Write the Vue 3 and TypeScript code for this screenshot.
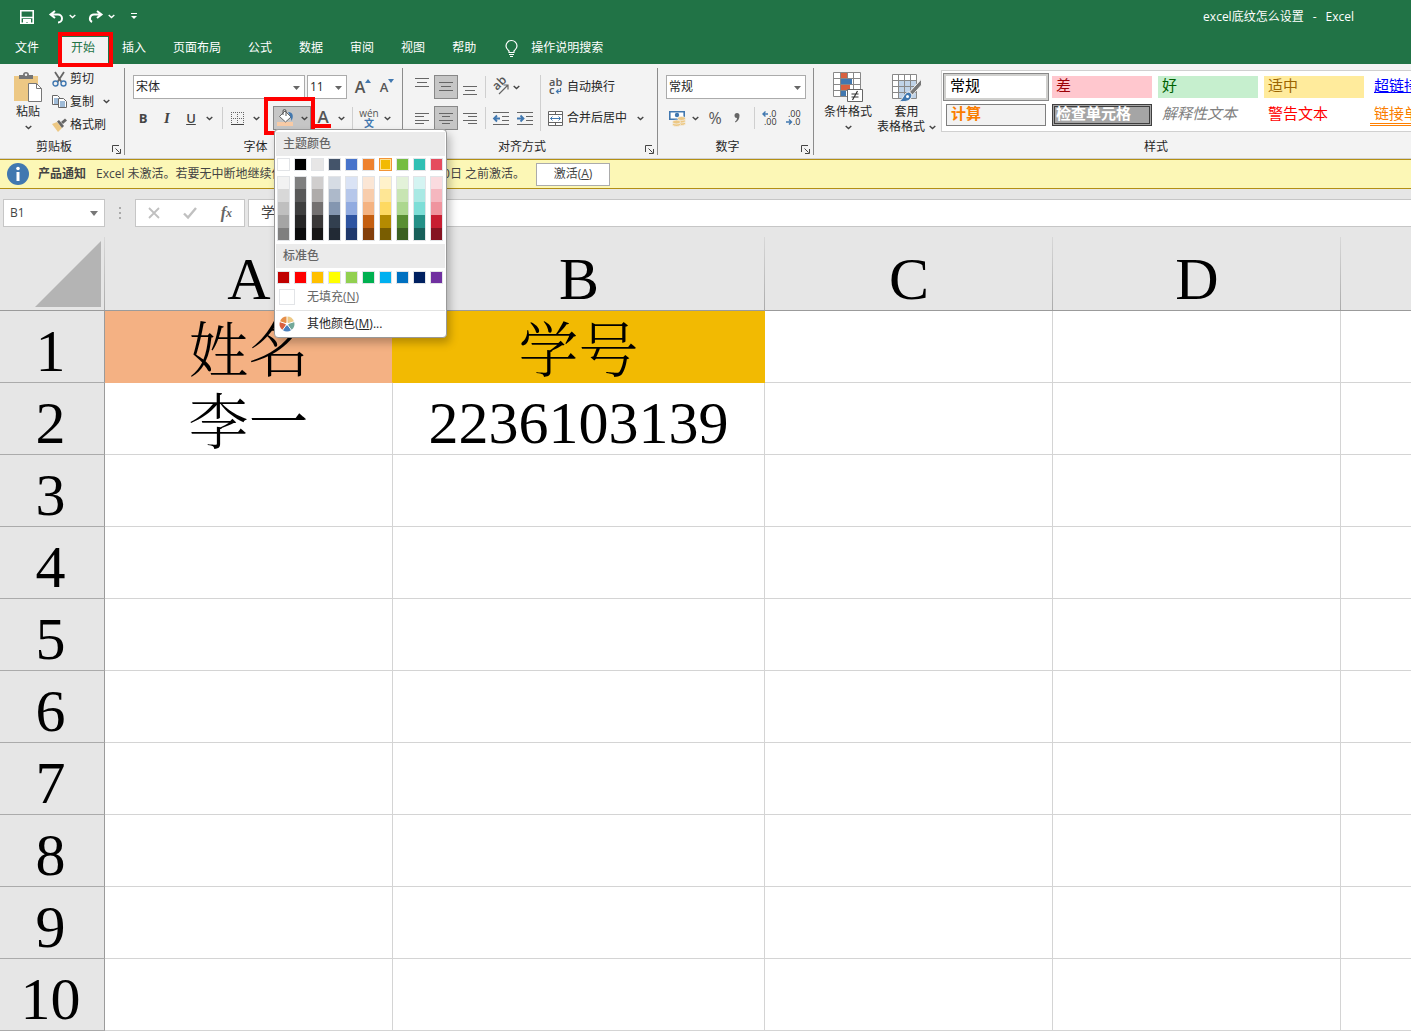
<script setup lang="ts">
import { ref } from 'vue'

interface ThemeColumn {
  base: string
  tints: string[]
}

interface CellStyle {
  name: string
  kind: string
}

const tabs = ['文件', '开始', '插入', '页面布局', '公式', '数据', '审阅', '视图', '帮助']
const activeTab = ref('开始')

const themeColumns: ThemeColumn[] = [
  { base: '#ffffff', tints: ['#f2f2f2', '#d8d8d8', '#bfbfbf', '#a5a5a5', '#7f7f7f'] },
  { base: '#000000', tints: ['#7f7f7f', '#595959', '#3f3f3f', '#262626', '#0c0c0c'] },
  { base: '#e7e6e6', tints: ['#d0cece', '#aeabaa', '#737070', '#3a3838', '#171616'] },
  { base: '#44546a', tints: ['#d6dce4', '#adb9ca', '#8496b0', '#323f4f', '#222a35'] },
  { base: '#4874cb', tints: ['#dae3f5', '#b6c7ea', '#91abe0', '#2e54a1', '#1f386b'] },
  { base: '#ee822f', tints: ['#fbe6d5', '#f8cdac', '#f4b382', '#c45f11', '#833f0b'] },
  { base: '#f2ba02', tints: ['#fff2ca', '#fee695', '#fed961', '#b58b01', '#795d01'] },
  { base: '#75bd42', tints: ['#e3f2d9', '#c8e5b3', '#acd78e', '#588e32', '#3a5f21'] },
  { base: '#30c0b4', tints: ['#d4f4f2', '#a9e9e4', '#7dded7', '#249087', '#18605a'] },
  { base: '#e54c5e', tints: ['#fadbdf', '#f5b7bf', '#ef949e', '#c81d31', '#851321'] },
]
const pickedTheme = ref('#f2ba02')

const standardColors = [
  '#c00000', '#ff0000', '#ffc000', '#ffff00', '#92d050',
  '#00b050', '#00b0f0', '#0070c0', '#002060', '#7030a0',
]

const cellStyles: CellStyle[] = [
  { name: '常规', kind: 'normal' },
  { name: '差', kind: 'bad' },
  { name: '好', kind: 'good' },
  { name: '适中', kind: 'neutral' },
  { name: '超链接', kind: 'hyperlink' },
  { name: '计算', kind: 'calc' },
  { name: '检查单元格', kind: 'check' },
  { name: '解释性文本', kind: 'explain' },
  { name: '警告文本', kind: 'warn' },
  { name: '链接单元格', kind: 'linked' },
]

const columns = ['A', 'B', 'C', 'D', '']
const rowCount = 10
const cells: Record<string, string> = { A1: '姓名', B1: '学号', A2: '李一', B2: '2236103139' }

const isHan = (text?: string): boolean => /[\u4e00-\u9fff]/.test(text ?? '')

const fontName = ref('宋体')
const fontSize = ref('11')
const numberFormat = ref('常规')
const cellRef = ref('B1')
const formula = ref('学号')
</script>

<template>
  <div class="app">
    <svg class="defs" aria-hidden="true">
      <symbol id="chev" viewBox="0 0 7 5"><path d="M.7 1l2.8 2.6L6.300 1" fill="none" stroke="currentColor" stroke-width="1.4" /></symbol>
      <symbol id="tri" viewBox="0 0 7 4"><path d="M0 0h7L3.500 4z" fill="currentColor" /></symbol>
      <symbol id="launch" viewBox="0 0 9 9"><path d="M.5 7V.5H7M3.500 3.500l4 4M8.500 4v4.500H4" fill="none" stroke="#444" /></symbol>
    </svg>

    <header class="titlebar">
      <div class="quick">
        <button aria-label="保存" class="q-save">
          <svg width="14" height="14" viewBox="0 0 14 14"><path d="M.8.8h12.400v12.400H.8zM.8 7.500h12.400" fill="none" stroke="#fff" stroke-width="1.600" /><path d="M3 9h8v5H8v-2H6v2H3z" fill="#fff" /></svg>
        </button>
        <button aria-label="撤消" class="q-undo">
          <svg width="15" height="13" viewBox="0 0 15 13"><path d="M6 1L1.500 4.500 6 8M2 4.500h7a4 4 0 0 1 0 8" fill="none" stroke="#fff" stroke-width="2" /></svg>
          <svg class="chev"><use href="#chev" /></svg>
        </button>
        <button aria-label="恢复" class="q-redo">
          <svg width="15" height="13" viewBox="0 0 15 13"><path d="M9 1l4.500 3.500L9 8M13 4.500H6a4 4 0 0 0-2 7.500" fill="none" stroke="#fff" stroke-width="2" /></svg>
          <svg class="chev"><use href="#chev" /></svg>
        </button>
        <button aria-label="自定义快速访问工具栏">
          <svg width="6" height="7" viewBox="0 0 6 7"><path d="M0 .5h6" stroke="#fff" /><path d="M0 3h6L3 6z" fill="#fff" /></svg>
        </button>
      </div>
      <div class="doc-title"><span>excel底纹怎么设置</span><span>-</span><span>Excel</span></div>
    </header>

    <nav class="tabs">
      <button
        v-for="tab in tabs"
        :key="tab"
        :class="['tab', { active: tab === activeTab, file: tab === '文件' }]"
        @click="activeTab = tab"
      >{{ tab }}</button>
      <button class="tell-me">
        <svg width="13" height="17" viewBox="0 0 13 17"><path d="M4 12.500V11C2.500 9.500 1 8.500 1 6a5.500 5.500 0 0 1 11 0c0 2.500-1.500 3.500-3 5v1.500zM4 14.500h5M5 16.500h3" fill="none" stroke="#fff" stroke-width="1.200" /></svg>
        操作说明搜索
      </button>
    </nav>

    <section class="ribbon">
      <div class="group clipboard">
        <div class="body">
          <button class="paste">
            <svg width="30" height="31" viewBox="0 0 30 31"><path d="M1 4h24v25H1z" fill="#edc884" /><path d="M6 7V3h4a3 3 0 0 1 6 0h4v4z" fill="#757575" /><circle cx="13" cy="2.800" r="1.200" fill="#f3f3f3" /><path d="M15.500 11.500h8l5 5v13h-13z" fill="#fff" stroke="#777" /><path d="M23.500 11.500v5h5" fill="none" stroke="#777" /></svg>
            <span>粘贴</span>
            <svg class="chev"><use href="#chev" /></svg>
          </button>
          <div class="clip-list">
            <button>
              <svg width="15" height="16" viewBox="0 0 15 16"><path d="M3 1l6.500 10M12 1L5.500 11" stroke="#666" stroke-width="1.800" /><circle cx="3.500" cy="12.500" r="2.500" fill="none" stroke="#4178b0" stroke-width="1.400" /><circle cx="11.500" cy="12.500" r="2.500" fill="none" stroke="#4178b0" stroke-width="1.400" /></svg>
              剪切
            </button>
            <button>
              <svg width="15" height="15" viewBox="0 0 15 15"><path d="M.5 1.500h5l2 2v7h-7z" fill="#fff" stroke="#666" /><path d="M2 5h4M2 7h4M2 9h4" stroke="#4178b0" /><path d="M6.500 4.500h5l3 3v6h-8z" fill="#fff" stroke="#666" /><path d="M8 8h5M8 10h5M8 12h5" stroke="#4178b0" /></svg>
              复制
              <svg class="chev far"><use href="#chev" /></svg>
            </button>
            <button>
              <svg width="15" height="14" viewBox="0 0 15 14"><path d="M0 6l5-2 5 6-4 4z" fill="#edc884" /><path d="M5 3.500l2-1.500 5 6-2 2z" fill="#666" /><path d="M9 4l4-3.500 2 2L11 6z" fill="#666" /></svg>
              格式刷
            </button>
          </div>
        </div>
        <footer>剪贴板<svg class="launch"><use href="#launch" /></svg></footer>
      </div>

      <div class="group font">
        <div class="rows">
          <div class="row">
            <label class="combo name"><select v-model="fontName" aria-label="字体"><option>宋体</option></select><svg class="tri"><use href="#tri" /></svg></label>
            <label class="combo size"><select v-model="fontSize" aria-label="字号"><option>11</option></select><svg class="tri"><use href="#tri" /></svg></label>
            <button class="ico grow" aria-label="增大字号">
              <b class="big">A</b><svg width="6" height="4" viewBox="0 0 6 4"><path d="M0 4l3-4 3 4z" fill="#4178b0" /></svg>
            </button>
            <button class="ico" aria-label="减小字号">
              <b class="small">A</b><svg width="6" height="4" viewBox="0 0 6 4"><path d="M0 0l3 4 3-4z" fill="#4178b0" /></svg>
            </button>
          </div>
          <div class="row">
            <button class="ico letter"><b>B</b></button>
            <button class="ico letter"><i>I</i></button>
            <button class="ico letter"><u>U</u></button>
            <button class="drop" aria-label="下划线选项"><svg class="chev"><use href="#chev" /></svg></button>
            <span class="sep wide"></span>
            <button class="ico" aria-label="边框">
              <svg width="14" height="13" viewBox="0 0 14 13"><path d="M.5 0v12M6.500 0v12M12.500 0v12M0 .5h13M0 6.500h13" fill="none" stroke="#666" stroke-dasharray="1 1" /><path d="M0 12.500h13" stroke="#444" /></svg>
            </button>
            <button class="drop" aria-label="边框选项"><svg class="chev"><use href="#chev" /></svg></button>
            <div class="fill-wrap">
              <button class="fill" aria-label="填充颜色">
                <svg width="18" height="18" viewBox="0 0 18 18"><path d="M0 13h16v4H0z" fill="#f8cba6" /><path d="M2.500 7.500L8 2l6 6-5.500 5z" fill="#fff" stroke="#666" /><path d="M6 6V2a1.500 1.500 0 0 1 3 0v5" fill="none" stroke="#555" /><path d="M11 3c5 0 6 4 3.500 9-.5-3-1-5-3.500-9z" fill="#4178b0" /></svg>
                <svg class="chev"><use href="#chev" /></svg>
              </button>
              <div class="palette" role="menu">
                <h3>主题颜色</h3>
                <div class="swatches">
                  <button
                    v-for="col in themeColumns"
                    :key="col.base"
                    :class="['swatch', { picked: col.base === pickedTheme }]"
                    :style="{ background: col.base }"
                    :aria-label="col.base"
                    @click="pickedTheme = col.base"
                  ></button>
                </div>
                <div class="swatches tints">
                  <div v-for="col in themeColumns" :key="col.base" class="tint-col">
                    <button v-for="t in col.tints" :key="t" :style="{ background: t }" :aria-label="t"></button>
                  </div>
                </div>
                <h3>标准色</h3>
                <div class="swatches standard">
                  <button v-for="c in standardColors" :key="c" class="swatch" :style="{ background: c }" :aria-label="c"></button>
                </div>
                <button class="item dim"><span class="empty"></span><span>无填充(<u>N</u>)</span></button>
                <button class="item more">
                  <svg width="16" height="16" viewBox="-8 -8 16 16"><path d="M0 0V-7.500A7.500 7.500 0 0 1 7.100-2.300z" fill="#edc884" /><path d="M0 0l7.100-2.300A7.500 7.500 0 0 1 4.400 6z" fill="#72a899" /><path d="M0 0l4.400 6a7.500 7.500 0 0 1-8.800 0z" fill="#4a80bd" /><path d="M0 0l-4.400 6a7.500 7.500 0 0 1-2.700-8.300z" fill="#d8603f" /><path d="M0 0l-7.100-2.300A7.500 7.500 0 0 1 0-7.500z" fill="#e58f49" /><path d="M0 0v-8M0 0l7.600-2.500M0 0l4.700 6.500M0 0l-4.700 6.500M0 0l-7.600-2.500" stroke="#fff" stroke-width="1" /><circle r="1.500" fill="#fff" /></svg>
                  <span>其他颜色(<u>M</u>)...</span>
                </button>
              </div>
            </div>
            <button class="ico color" aria-label="字体颜色"><b>A</b></button>
            <button class="drop" aria-label="字体颜色选项"><svg class="chev"><use href="#chev" /></svg></button>
            <span class="sep wider"></span>
            <button class="ico pinyin"><span>wén</span><em>文</em></button>
            <button class="drop" aria-label="拼音选项"><svg class="chev"><use href="#chev" /></svg></button>
          </div>
        </div>
        <footer>字体</footer>
      </div>

      <div class="group align">
        <div class="body split">
          <div class="rows">
            <div class="row">
              <button class="ico" aria-label="顶端对齐"><svg width="14" height="18" viewBox="0 0 14 18"><path d="M0 .5h14M2 4.500h10M0 8.500h14" stroke="#666" /></svg></button>
              <button class="ico on" aria-label="垂直居中"><svg width="14" height="18" viewBox="0 0 14 18"><path d="M0 4.500h14M2 8.500h10M0 12.500h14" stroke="#666" /></svg></button>
              <button class="ico" aria-label="底端对齐"><svg width="14" height="18" viewBox="0 0 14 18"><path d="M0 8.500h14M2 12.500h10M0 16.500h14" stroke="#666" /></svg></button>
              <span class="sep"></span>
              <button class="orient" aria-label="方向">
                <svg width="18" height="16" viewBox="0 0 18 16"><text x="0" y="0" transform="translate(5 12) rotate(-45)" font-size="12" font-weight="600" fill="#555">ab</text><path d="M7 15l9-9M11.500 6H16v4.500" fill="none" stroke="#666" stroke-width="1.200" /></svg>
                <svg class="chev"><use href="#chev" /></svg>
              </button>
            </div>
            <div class="row">
              <button class="ico" aria-label="左对齐"><svg width="14" height="13" viewBox="0 0 14 13"><path d="M0 1.500h14M0 4.500h9M0 8.500h14M0 11.500h9" stroke="#666" /></svg></button>
              <button class="ico on" aria-label="居中"><svg width="14" height="13" viewBox="0 0 14 13"><path d="M0 1.500h14M3 4.500h8M0 8.500h14M3 11.500h8" stroke="#666" /></svg></button>
              <button class="ico" aria-label="右对齐"><svg width="14" height="13" viewBox="0 0 14 13"><path d="M0 1.500h14M5 4.500h9M0 8.500h14M5 11.500h9" stroke="#666" /></svg></button>
              <span class="sep"></span>
              <button class="ico" aria-label="减少缩进"><svg width="16" height="13" viewBox="0 0 16 13"><path d="M0 .5h16M9 4.500h7M9 8.500h7M0 12.500h16" stroke="#666" /><path d="M1 6.500h6M4 3.500l-3 3 3 3" fill="none" stroke="#4178b0" stroke-width="1.800" /></svg></button>
              <button class="ico" aria-label="增加缩进"><svg width="16" height="13" viewBox="0 0 16 13"><path d="M0 .5h16M9 4.500h7M9 8.500h7M0 12.500h16" stroke="#666" /><path d="M0 6.500h6M3.500 3.500l3 3-3 3" fill="none" stroke="#4178b0" stroke-width="1.800" /></svg></button>
            </div>
          </div>
          <span class="sep tall"></span>
          <div class="rows texts">
            <button class="row">
              <svg width="15" height="16" viewBox="0 0 15 16"><text x="1" y="7" font-size="11" font-weight="600" fill="#555">ab</text><text x="1" y="15" font-size="11" font-weight="600" fill="#555">c</text><path d="M12.500 9v3.500H8.500M10.500 10.500l-2 2 2 2" fill="none" stroke="#4178b0" stroke-width="1.200" /></svg>
              自动换行
            </button>
            <button class="row">
              <svg width="15" height="15" viewBox="0 0 15 15"><path d="M.5.5h14v14H.5zM.5 3.500h14M.5 11.500h14M7.500.5v3M7.500 11.500v3" fill="#fff" stroke="#666" /><path d="M2.500 7.500h10M4.500 5.500l-2 2 2 2M10.500 5.500l2 2-2 2" fill="none" stroke="#4178b0" /></svg>
              合并后居中
              <svg class="chev far"><use href="#chev" /></svg>
            </button>
          </div>
        </div>
        <footer>对齐方式<svg class="launch"><use href="#launch" /></svg></footer>
      </div>

      <div class="group number">
        <div class="rows">
          <label class="combo format"><select v-model="numberFormat" aria-label="数字格式"><option>常规</option></select><svg class="tri"><use href="#tri" /></svg></label>
          <div class="row">
            <button class="ico" aria-label="会计数字格式">
              <svg width="17" height="17" viewBox="0 0 17 17"><path d="M.8 1.800h14.400v7.400H.8z" fill="#fff" stroke="#4178b0" stroke-width="1.600" /><circle cx="8" cy="5" r="2.200" fill="#4178b0" /><g fill="#edc884" stroke="#f3f3f3" stroke-width=".7"><ellipse cx="12.500" cy="13.500" rx="4" ry="2" /><ellipse cx="12.500" cy="11" rx="4" ry="2" /><ellipse cx="12.500" cy="8.500" rx="4" ry="2" /><ellipse cx="7.500" cy="14.500" rx="4" ry="2" /><ellipse cx="7.500" cy="12" rx="4" ry="2" /></g></svg>
            </button>
            <button class="drop" aria-label="货币选项"><svg class="chev"><use href="#chev" /></svg></button>
            <button class="ico percent">%</button>
            <button class="ico" aria-label="千位分隔样式"><svg width="7" height="10" viewBox="0 0 7 10"><path d="M3 0a2.500 2.500 0 0 1 2.500 2.500C5.500 6 4 8 1.500 9.500L1 8.500c1.300-1 2-2 2-3.500A2.500 2.500 0 0 1 3 0z" fill="#666" /></svg></button>
            <span class="sep"></span>
            <button class="ico dec" aria-label="增加小数位数">
              <svg width="16" height="16" viewBox="0 0 16 16"><text x="7" y="7" font-size="9" fill="#333">.0</text><text x="2" y="15" font-size="9" fill="#333">.00</text><path d="M1 4h5M3.500 1.500L1 4l2.500 2.500" fill="none" stroke="#4178b0" stroke-width="1.400" /></svg>
            </button>
            <button class="ico dec" aria-label="减少小数位数">
              <svg width="16" height="16" viewBox="0 0 16 16"><text x="2" y="7" font-size="9" fill="#333">.00</text><text x="7" y="15" font-size="9" fill="#333">.0</text><path d="M0 12h5M3 9.500L5.500 12 3 14.500" fill="none" stroke="#4178b0" stroke-width="1.400" /></svg>
            </button>
          </div>
        </div>
        <footer>数字<svg class="launch"><use href="#launch" /></svg></footer>
      </div>

      <div class="group styles">
        <div class="body">
          <button class="large">
            <svg width="30" height="31" viewBox="0 0 30 31"><path d="M.5.5h27v24H.5z" fill="#fff" /><path d="M8 1h6v5H8zM8 13h9v5H8z" fill="#d8603f" /><path d="M8 7h11v5H8zM8 19h5v6H8z" fill="#4178b0" /><path d="M.5.5h27v24H.5zM.5 6.500h27M.5 12.500h27M.5 18.500h27M7.500.5v24M14.500.5v6M20.500.5v24" fill="none" stroke="#888" /><path d="M14.500 17.500h15v12h-15z" fill="#fff" stroke="#666" /><path d="M18.500 22h7M18.500 25h7M24.500 19l-5 9" stroke="#333" stroke-width="1.200" /></svg>
            <span>条件格式</span>
            <svg class="chev"><use href="#chev" /></svg>
          </button>
          <button class="large table-format">
            <svg width="30" height="31" viewBox="0 0 30 31"><path d="M.5 2.500h24v24H.5z" fill="#fff" /><path d="M7 8h18v18H7z" fill="#c0d3e8" /><path d="M.5 2.500h24v24H.5zM.5 8.500h24M.5 14.500h24M.5 20.500h24M6.500 2.500v24M12.500 2.500v24M18.500 2.500v24" fill="none" stroke="#888" /><path d="M29.500 7v6l-9 10-3-3z" fill="#777" stroke="#f3f3f3" /><path d="M16 20c3 0 5 3 3 6-2 4-8 4-12 3 4-1 4-7 9-9z" fill="#4178b0" stroke="#f3f3f3" /><circle cx="15.500" cy="24.500" r="1.500" fill="#fff" /></svg>
            <span>套用</span>
            <span class="second">表格格式<svg class="chev"><use href="#chev" /></svg></span>
          </button>
          <div class="gallery">
            <button v-for="s in cellStyles" :key="s.name" :class="['style', s.kind]">{{ s.name }}</button>
          </div>
        </div>
        <footer>样式</footer>
      </div>
    </section>

    <section class="notice">
      <svg width="22" height="22" viewBox="0 0 22 22"><circle cx="11" cy="11" r="11" fill="#4178b0" /><circle cx="11" cy="5.500" r="1.800" fill="#fff" /><path d="M9.500 9h3v9h-3z" fill="#fff" /></svg>
      <b>产品通知</b>
      <p><span class="lead">Excel 未激活。若要无中断地继续使用，请在 2022年10月2</span><span>0日 之前激活。</span></p>
      <button>激活(<u>A</u>)</button>
    </section>

    <section class="formula-bar">
      <label class="name-box"><input v-model="cellRef" aria-label="名称框" /><svg width="8" height="5" viewBox="0 0 8 5"><path d="M0 0h8L4 5z" fill="#777" /></svg></label>
      <span class="dots"><i></i><i></i><i></i></span>
      <div class="fx">
        <button aria-label="取消"><svg width="12" height="12" viewBox="0 0 12 12"><path d="M1 1l10 10M11 1L1 11" stroke="#c0c0c0" stroke-width="1.800" /></svg></button>
        <button aria-label="输入"><svg width="14" height="12" viewBox="0 0 14 12"><path d="M1 6.500L5 10.500 13 1" fill="none" stroke="#c0c0c0" stroke-width="2.400" /></svg></button>
        <button class="fn">f<small>x</small></button>
      </div>
      <input v-model="formula" class="formula" aria-label="编辑栏" />
    </section>

    <table class="sheet">
      <colgroup>
        <col class="c-head" /><col class="c-std" /><col class="c-wide" /><col class="c-std" /><col class="c-std" /><col />
      </colgroup>
      <thead>
        <tr>
          <th class="corner"><svg width="66" height="66" viewBox="0 0 66 66"><path d="M66 0v66H0z" fill="#b4b4b4" /></svg></th>
          <th v-for="(c, i) in columns" :key="i" scope="col">{{ c }}</th>
        </tr>
      </thead>
      <tbody>
        <tr v-for="r in rowCount" :key="r">
          <th scope="row">{{ r }}</th>
          <td
            v-for="(c, i) in columns"
            :key="i"
            :class="{ peach: c + r === 'A1', gold: c + r === 'B1', han: isHan(cells[c + r]) }"
          >{{ cells[c + r] }}</td>
        </tr>
      </tbody>
    </table>
  </div>
</template>

<style>
body { margin: 0; background: #fff; }
</style>

<style scoped>
.app {
  min-height: 100vh;
  overflow: clip;
  font: 12px/16px "Open Sans", "Noto Sans CJK SC", sans-serif;
  color: #262626;
}
.app *, .app *::after { box-sizing: border-box; }
.defs { position: absolute; width: 0; height: 0; }
button, input, select { font: inherit; color: inherit; margin: 0; padding: 0; border: 0; background: none; outline: 0; border-radius: 0; }
button { display: flex; align-items: center; white-space: nowrap; flex: none; }
svg { display: block; flex: none; overflow: visible; }
.chev { width: 7px; height: 5px; color: #444; }
.tri { width: 7px; height: 4px; color: #666; }

.titlebar { display: flex; align-items: center; justify-content: space-between; height: 33px; padding: 0 57px 0 20px; background: #217346; color: #fff; }
.quick { display: flex; align-items: center; }
.quick .chev { color: #fff; }
.quick button { gap: 5px; }
.q-save { margin-right: 15px; }
.q-undo, .q-redo { margin-right: 12px; }
.quick .q-redo { margin-right: 16px; }
.doc-title { display: flex; gap: 9px; }

.tabs { display: flex; height: 31px; padding: 4px 0 0 2px; background: #217346; color: #fff; }
.tab { position: relative; height: 27px; padding: 0 13px 5px; margin-right: 1px; }
.tab.file { margin-right: 6px; }
.tab.active { background: #f3f3f3; color: #217346; }
.tab.active::after { content: ""; position: absolute; z-index: 3; inset: -5px -5px -3px 0; border: 4px solid #f00; }
.tell-me { gap: 13px; padding: 0 0 5px 15px; }

.ribbon { display: flex; height: 95px; background: #f3f3f3; border-bottom: 1px solid #d0d0d0; }
.group { display: flex; flex-direction: column; flex: none; height: 87px; margin-top: 4px; border-right: 1px solid #8c8c8c; padding-top: 7px; }
.group footer { display: flex; justify-content: center; position: relative; margin-top: auto; padding-right: 16px; height: 16px; }
.launch { position: absolute; right: 3px; bottom: 1px; width: 9px; height: 9px; }
.body { display: flex; }
.rows { display: flex; flex-direction: column; gap: 7px; }
.row { display: flex; height: 24px; align-items: center; }
.ico { width: 24px; height: 24px; justify-content: center; color: #555; }
.on, .fill { background: #c6c6c6; border: 1px solid #888; }
.drop { width: 12px; height: 24px; justify-content: center; }
.sep { width: 1px; height: 22px; margin: 0 3px; background: #cfcfcf; flex: none; }
.sep.wide { margin: 0 3px 0 7px; }
.sep.wider { margin: 0 4px 0 5px; }
.sep.tall { height: 56px; }
.far { margin-left: 6px; }

.clipboard { width: 125px; padding-top: 4px; }
.paste { flex-direction: column; width: 28px; margin-left: 14px; height: 60px; }
.paste span { margin: 1px 0 5px; }
.clip-list { display: flex; flex-direction: column; margin: -5px 0 0 10px; }
.clip-list button { height: 23px; gap: 3px; }

.font { width: 278px; padding-left: 6px; }
.font footer { padding-right: 22px; }
.combo { display: flex; position: relative; height: 24px; flex: none; background: #fff; border: 1px solid #ababab; }
.combo select { appearance: none; width: 100%; padding: 0 0 0 2px; }
.combo .tri { position: absolute; right: 4px; top: 10px; }
.combo.name { width: 172px; margin: 0 2px; }
.combo.size { width: 40px; margin-right: 4px; }
.combo.format { width: 140px; }
.big { font-size: 16px; font-weight: 600; }
.small { font-size: 13px; font-weight: 600; }
.ico > b + svg { margin-bottom: 12px; }
.letter { font-size: 13px; color: #444; }
.letter i { font-family: "Liberation Serif", serif; font-size: 15px; font-weight: 700; }
.letter u { font-weight: 600; }
.fill-wrap { position: relative; margin-left: 11px; }
.fill { width: 38px; height: 24px; gap: 6px; padding-left: 3px; }
.fill-wrap::after { content: ""; position: absolute; z-index: 2; inset: -9px -4px -5px -9px; border: 4px solid #f00; pointer-events: none; }
.color b { width: 16px; height: 19px; border-bottom: 4px solid #f00; font-size: 17px; line-height: 15px; font-weight: 600; text-align: center; }
.pinyin { flex-direction: column; font-size: 10px; line-height: 9px; }
.pinyin em { font-style: normal; color: #4178b0; line-height: 10px; font-weight: 700; }

.palette { position: absolute; z-index: 4; left: 1px; top: 23px; width: 173px; height: 209px; padding: 2px 1px 0; background: #fff; border: 1px solid #999; border-radius: 4px; box-shadow: 3px 5px 8px rgba(0, 0, 0, 0.25); }
.palette h3 { margin: 0; height: 24px; padding: 4px 7px; font-size: 12px; line-height: 16px; font-weight: 500; color: #666; background: #ebebeb; }
.swatches { display: flex; gap: 4px; padding: 2px 1px 0; }
.swatch { width: 13px; height: 13px; border: 1px solid #e2e4e7; }
.swatch.picked { border-color: #f29436; box-shadow: inset 0 0 0 1px #ffe294; }
.tints { padding: 5px 1px 3px; }
.standard { padding-top: 3px; }
.tint-col { display: flex; flex-direction: column; width: 13px; border: 1px solid #e2e4e7; }
.tint-col button { height: 13px; width: 11px; }
.tint-col button:first-child, .tint-col button:last-child { height: 12px; }
.item { width: 100%; height: 26px; padding-left: 3px; gap: 12px; color: #262626; }
.item.dim { height: 27px; color: #666; border-bottom: 1px solid #e2e2e2; }
.empty { width: 16px; height: 16px; border: 1px solid #e2e4e7; }

.align { width: 255px; }
.align .split { padding-left: 7px; }
.orient { width: 48px; height: 24px; padding-left: 3px; gap: 3px; }
.texts { padding-left: 4px; }
.texts button { gap: 4px; }

.number { width: 156px; }
.number .rows { padding-left: 8px; }
.number .row { margin-left: -1px; }
.percent { font-size: 16px; padding-left: 4px; }
.number .row .sep { margin: 0 3px 0 5px; }

.styles { width: 684px; padding-top: 4px; border: 0; }
.styles footer { padding-right: 0; }
.large { flex-direction: column; width: 50px; height: 60px; margin: 0 0 0 9px; }
.large span { margin-top: 1px; }
.large > .chev { margin-top: 5px; }
.large.table-format { width: 59px; margin: 0 0 0 4px; }
.large .second { display: flex; align-items: center; gap: 4px; margin: -1px 0 0; }
.gallery { display: grid; grid-template-columns: repeat(5, 100px); grid-auto-rows: 22px; gap: 6px; margin: -2px 0 0 5px; height: 62px; padding: 5px 4px; background: #fff; border: 1px solid #d0d0d0; font-size: 15px; }
.style { padding: 0 4px 4px; }
.normal { background: #fff; color: #000; outline: 2px solid #d0d0ce; box-shadow: 0 0 0 3px #888; }
.bad { background: #ffc7ce; color: #9c0006; }
.good { background: #c6efce; color: #006100; }
.neutral { background: #ffeb9c; color: #9c6500; }
.hyperlink { color: #00f; text-decoration: underline; }
.calc { background: #f2f2f2; border: 1px solid #7f7f7f; color: #fa7d00; font-weight: 700; }
.check { background: #a5a5a5; border: 3px double #3f3f3f; color: #fff; font-weight: 700; padding-left: 1px; }
.explain { color: #7f7f7f; font-style: italic; }
.warn { color: #f00; }
.linked { color: #fa7d00; border-bottom: 3px double #ff8001; padding-bottom: 1px; }

.notice { display: flex; align-items: center; height: 30px; padding: 0 7px; background: #fcf7b6; border: solid #b38f14; border-width: 1px 0; color: #444; }
.notice b { margin: 0 10px 0 9px; }
.notice p { display: flex; margin: 0; width: 440px; white-space: nowrap; }
.notice .lead { width: 347px; overflow: hidden; }
.notice button { height: 23px; width: 74px; justify-content: center; background: #fff; border: 1px solid #ababab; }

.formula-bar { display: flex; height: 48px; padding: 10px 0 0 3px; background: #e6e6e6; color: #444; }
.formula-bar > * { height: 28px; }
.name-box { display: flex; align-items: center; width: 102px; padding: 0 6px; background: #fff; border: 1px solid #c6c6c6; }
.name-box input { flex: 1; min-width: 0; }
.dots { display: flex; flex-direction: column; justify-content: center; gap: 3px; width: 30px; padding-left: 14px; }
.dots i { width: 2px; height: 2px; background: #aaa; }
.fx { display: flex; width: 110px; justify-content: space-between; padding: 0 12px; margin-right: 3px; background: #fff; border: 1px solid #c6c6c6; }
.fn { font: italic 700 16px/20px "Liberation Serif", serif; color: #666; }
.fn small { font-size: 12px; }
.formula { flex: 1; min-width: 0; padding: 0 12px 4px; background: #fff; border: 1px solid #c6c6c6; border-right: 0; font-size: 14px; }

.sheet { width: 100%; table-layout: fixed; border-collapse: separate; border-spacing: 0; color: #000; font-family: "Liberation Serif", "SimSun", "Noto Serif CJK SC", "Noto Sans CJK SC", serif; font-size: 60px; line-height: 60px; font-weight: 300; }
.c-head { width: 105px; }
.c-std { width: 288px; }
.c-wide { width: 372px; }
.sheet th, .sheet td { height: 72px; padding: 10px 0 0; border: solid #d4d4d4; border-width: 0 1px 1px 0; text-align: center; vertical-align: top; font-weight: 300; white-space: nowrap; }
.sheet td.han { padding-top: 12px; line-height: 59px; }
.sheet th { background: #e6e6e6; border-color: #9b9b9b; }
.sheet thead th { height: 74px; padding-top: 12px; border-right: 0; background: linear-gradient(#d8d8d8, #ababab) right / 1px 100% no-repeat #e6e6e6; }
.sheet tbody th { padding-right: 3px; border-bottom-color: #ababab; }
.sheet thead .corner { padding: 4px 0 0 35px; }
.sheet td.peach { background: #f4b183; border-color: #f4b183; border-right-color: #f2ba02; }
.sheet td.gold { background: #f2ba02; border-color: #f2ba02; }
.sheet td:last-child { border-right: 0; }
.sheet thead th:last-child { background: #e6e6e6; }
</style>
